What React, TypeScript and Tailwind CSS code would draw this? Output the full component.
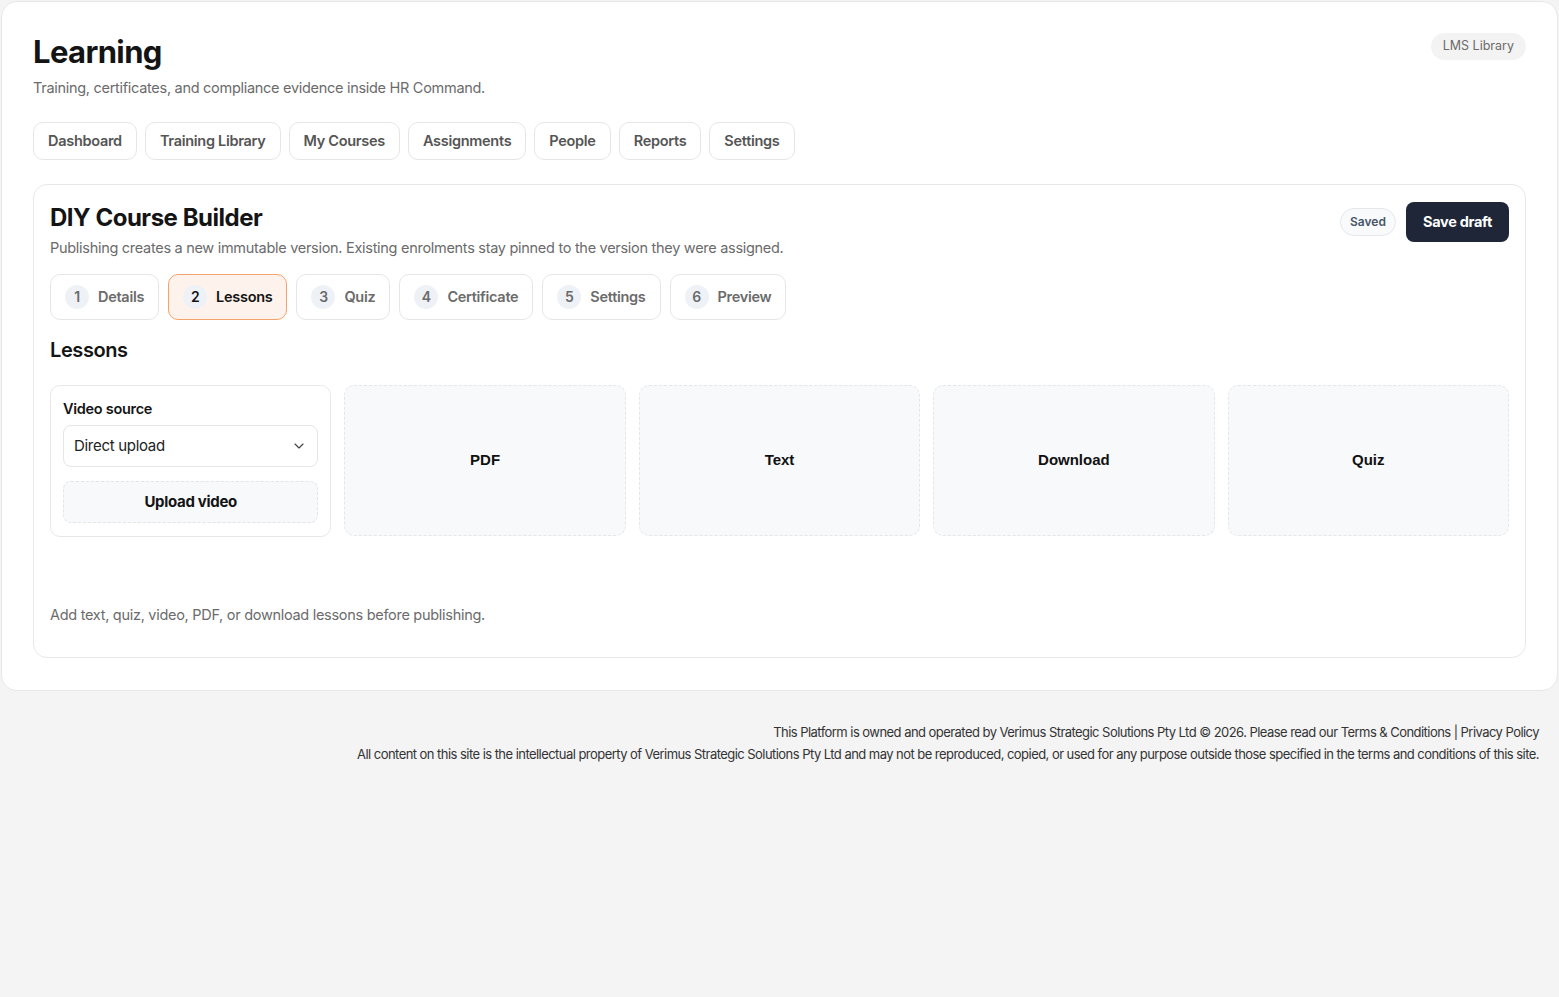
import React from 'react';
import { ChevronDown } from 'lucide-react';

const navTabs = ['Dashboard', 'Training Library', 'My Courses', 'Assignments', 'People', 'Reports', 'Settings'];

const steps = [
  { n: 1, label: 'Details' },
  { n: 2, label: 'Lessons' },
  { n: 3, label: 'Quiz' },
  { n: 4, label: 'Certificate' },
  { n: 5, label: 'Settings' },
  { n: 6, label: 'Preview' },
];

const lessonTypes = ['PDF', 'Text', 'Download', 'Quiz'];

export default function App() {
  return (
    <div className="min-h-screen bg-[#f4f4f4] font-['Inter',sans-serif] text-[#111]">
      <div className="mx-px pt-px">
        {/* Main card */}
        <div className="rounded-2xl border border-[#e8e8e8] bg-white px-[31px] pt-[31px] pb-8">
          <div className="flex items-start justify-between">
            <div>
              <h1 className="text-[31px] font-bold leading-[38px] tracking-[-0.02em] text-[#141414]">Learning</h1>
              <p className="mt-[6px] text-[14.5px] tracking-[-0.02em] text-[#6b6b6b]">
                Training, certificates, and compliance evidence inside HR Command.
              </p>
            </div>
            <span className="rounded-full bg-[#f3f3f3] px-3 py-[4px] text-[12.5px] text-[#6b6b6b]">LMS Library</span>
          </div>

          {/* Top nav */}
          <div className="mt-[23px] flex gap-2">
            {navTabs.map((t) => (
              <button
                key={t}
                className="h-[38px] rounded-[10px] border border-[#e6e6e6] bg-white px-[14px] text-[14.5px] font-semibold tracking-[-0.02em] text-[#555]"
              >
                {t}
              </button>
            ))}
          </div>

          {/* Course builder card */}
          <div className="mt-[24px] rounded-[14px] border border-[#e8e8e8] bg-white px-4 pt-[17px] pb-[31px]">
            <div className="flex items-start justify-between">
              <div>
                <h2 className="text-[24px] font-bold leading-[32px] tracking-[-0.02em] text-[#141414]">DIY Course Builder</h2>
                <p className="mt-[3px] text-[14.5px] tracking-[-0.02em] text-[#6b6b6b]">
                  Publishing creates a new immutable version. Existing enrolments stay pinned to the version they were assigned.
                </p>
              </div>
              <div className="flex items-center gap-[10px]">
                <span className="rounded-full border border-[#e5e7eb] bg-[#f8fafc] px-[9px] py-[4px] text-[12px] font-semibold text-[#475569]">
                  Saved
                </span>
                <button className="h-10 rounded-lg bg-[#1e2637] px-[17px] text-[14.5px] font-bold tracking-[-0.02em] text-white">
                  Save draft
                </button>
              </div>
            </div>

            {/* Steps */}
            <div className="mt-[15px] flex gap-[9px]">
              {steps.map((s) => {
                const active = s.n === 2;
                return (
                  <button
                    key={s.n}
                    className={`flex h-[46px] items-center gap-[9px] rounded-[10px] border px-[14px] text-[14.5px] font-semibold tracking-[-0.02em] ${
                      active ? 'border-[#f4a46a] bg-[#fdf3ec] text-[#141414]' : 'border-[#e6e6e6] bg-white text-[#6b6b6b]'
                    }`}
                  >
                    <span className="flex h-6 w-6 items-center justify-center rounded-full bg-[#eef2f7] text-[14px]">{s.n}</span>
                    {s.label}
                  </button>
                );
              })}
            </div>

            <h3 className="mt-[15px] text-[20px] font-semibold tracking-[-0.02em] text-[#141414]">Lessons</h3>

            {/* Lesson types */}
            <div className="mt-[20px] grid grid-cols-5 gap-[13px]">
              <div className="rounded-[10px] border border-[#e8e8e8] bg-white px-3 pt-3 pb-[13px]">
                <div className="text-[14.5px] font-semibold tracking-[-0.02em] text-[#141414]">Video source</div>
                <div className="mt-[6px] flex h-[42px] items-center justify-between rounded-lg border border-[#e6e6e6] bg-white px-[10px] text-[15px] tracking-[-0.02em] text-[#222]">
                  Direct upload
                  <ChevronDown className="h-4 w-4 text-[#444]" strokeWidth={1.75} />
                </div>
                <button className="mt-[14px] h-[42px] w-full rounded-lg border border-dashed border-[#e2e4e8] bg-[#f8f9fb] text-[15px] font-bold tracking-[-0.02em] text-[#141414]">
                  Upload video
                </button>
              </div>
              {lessonTypes.map((t) => (
                <div
                  key={t}
                  className="flex h-[151px] items-center justify-center rounded-[10px] border border-dashed border-[#e4e6ea] bg-[#f8f9fb] font-['Liberation_Sans',sans-serif] text-[15px] font-semibold text-[#111]"
                >
                  {t}
                </div>
              ))}
            </div>

            <p className="mt-[67px] text-[14.5px] tracking-[-0.02em] text-[#6b6b6b]">
              Add text, quiz, video, PDF, or download lessons before publishing.
            </p>
          </div>
        </div>
      </div>

      {/* Footer */}
      <footer className="px-5 pt-[30px] text-right text-[13px] leading-[22px] tracking-[-0.042em] text-[#333]">
        <p>
          This Platform is owned and operated by Verimus Strategic Solutions Pty Ltd © 2026. Please read our Terms &amp; Conditions | Privacy Policy
        </p>
        <p>
          All content on this site is the intellectual property of Verimus Strategic Solutions Pty Ltd and may not be reproduced, copied, or used for any purpose outside those specified in the terms and conditions of this site.
        </p>
      </footer>
    </div>
  );
}
